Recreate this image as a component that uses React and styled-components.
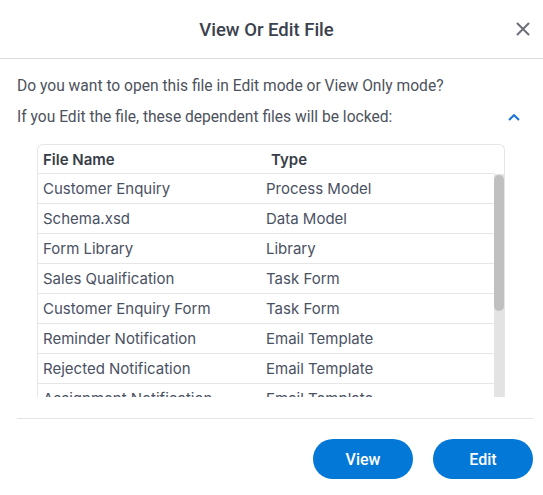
import React from "react";
import styled, { createGlobalStyle } from "styled-components";

const Global = createGlobalStyle`
  html, body { margin: 0; padding: 0; background: #fff; }
  body { font-family: Roboto, "Noto Sans", sans-serif; }
  * { box-sizing: border-box; }
`;

const Dialog = styled.div`
  width: 543px;
  height: 495px;
  background: #fff;
  display: flex;
  flex-direction: column;
`;

const Header = styled.header`
  flex-shrink: 0;
  height: 59px;
  border-bottom: 1px solid #dcdcdc;
  display: flex;
  align-items: center;
  justify-content: center;
  position: relative;
`;

const Title = styled.h1`
  margin: 2px 10px 0 0;
  font-family: Roboto, sans-serif;
  font-weight: 500;
  font-size: 18.5px;
  color: #3b414d;
`;

const CloseButton = styled.button`
  position: absolute;
  right: 10px;
  top: 19px;
  width: 20px;
  height: 20px;
  padding: 0;
  border: 0;
  background: none;
  display: flex;
  align-items: center;
  justify-content: center;
  cursor: pointer;
`;

const Body = styled.div`
  padding: 12px 10px 0 17px;
  flex: 1;
  display: flex;
  flex-direction: column;
`;

const Text = styled.p`
  margin: 0;
  font-size: 15.6px;
  line-height: 31px;
  color: #4d525c;
  display: flex;
  align-items: center;
  justify-content: space-between;
`;

const Toggle = styled.button`
  border: 0;
  background: none;
  padding: 0;
  margin-right: 12px;
  display: flex;
  cursor: pointer;
`;

const TableBox = styled.div`
  margin: 11px 28px 0 20px;
  height: 253px;
  flex-shrink: 0;
  border: 1px solid #e6e6e6;
  border-bottom: 0;
  border-radius: 6px 6px 0 0;
  display: flex;
  flex-direction: column;
  overflow: hidden;
  font-family: Inter, sans-serif;
  font-size: 15px;
`;

const Row = styled.div`
  display: grid;
  grid-template-columns: 223px 1fr;
  height: 30px;
  align-items: center;
  flex-shrink: 0;
  border-bottom: 1px solid #e6e6e6;
  padding-left: 5px;
  color: #4a5163;
`;

const HeadRow = styled(Row)`
  height: 29px;
  margin-right: 10px;
  color: #383d48;
  font-weight: 600;
`;

const Cell = styled.span`
  white-space: nowrap;
  padding-left: ${(p) => (p.$indent ? "5px" : "0")};
`;

const BodyArea = styled.div`
  flex: 1;
  display: flex;
  min-height: 0;
`;

const Rows = styled.div`
  flex: 1;
  overflow: hidden;
  display: flex;
  flex-direction: column;
`;

const ScrollTrack = styled.div`
  width: 10px;
  flex-shrink: 0;
  background: #e3e3e3;
  padding-top: 1px;
`;

const ScrollThumb = styled.div`
  height: 136px;
  border-radius: 5px;
  background: #c0c0c0;
`;

const Footer = styled.footer`
  flex-shrink: 0;
  border-top: 1px solid #e4e4e4;
  margin-top: 21px;
  padding: 20px 0 16px;
  display: flex;
  justify-content: flex-end;
  gap: 20px;
`;

const Button = styled.button`
  width: 100px;
  height: 40px;
  border: 0;
  border-radius: 20px;
  background: #0478d6;
  color: #fff;
  font-family: Roboto, sans-serif;
  font-size: 16px;
  font-weight: 500;
  cursor: pointer;
`;

const files = [
  ["Customer Enquiry", "Process Model"],
  ["Schema.xsd", "Data Model"],
  ["Form Library", "Library"],
  ["Sales Qualification", "Task Form"],
  ["Customer Enquiry Form", "Task Form"],
  ["Reminder Notification", "Email Template"],
  ["Rejected Notification", "Email Template"],
  ["Assignment Notification", "Email Template"],
  ["Approved Notification", "Email Template"],
  ["Enquiry Rules", "Business Rule"],
  ["Customer Lookup", "Data Source"],
  ["Enquiry Report", "Report"],
];

export default function App() {
  return (
    <>
      <Global />
      <Dialog>
        <Header>
          <Title>View Or Edit File</Title>
          <CloseButton aria-label="Close">
            <svg width="14" height="14" viewBox="0 0 14 14">
              <path d="M1.5 1.5L12.5 12.5M12.5 1.5L1.5 12.5" stroke="#6b6f78" strokeWidth="2" strokeLinecap="round" />
            </svg>
          </CloseButton>
        </Header>
        <Body>
          <Text>Do you want to open this file in Edit mode or View Only mode?</Text>
          <Text>
            If you Edit the file, these dependent files will be locked:
            <Toggle aria-label="Collapse">
              <svg width="14" height="9" viewBox="0 0 14 9">
                <path d="M2 7L7 2.2L12 7" fill="none" stroke="#1a73d6" strokeWidth="2" />
              </svg>
            </Toggle>
          </Text>
          <TableBox>
            <HeadRow>
              <Cell>File Name</Cell>
              <Cell $indent>Type</Cell>
            </HeadRow>
            <BodyArea>
              <Rows>
                {files.map(([name, type]) => (
                  <Row key={name}>
                    <Cell>{name}</Cell>
                    <Cell>{type}</Cell>
                  </Row>
                ))}
              </Rows>
              <ScrollTrack>
                <ScrollThumb />
              </ScrollTrack>
            </BodyArea>
          </TableBox>
          <Footer>
            <Button>View</Button>
            <Button>Edit</Button>
          </Footer>
        </Body>
      </Dialog>
    </>
  );
}
